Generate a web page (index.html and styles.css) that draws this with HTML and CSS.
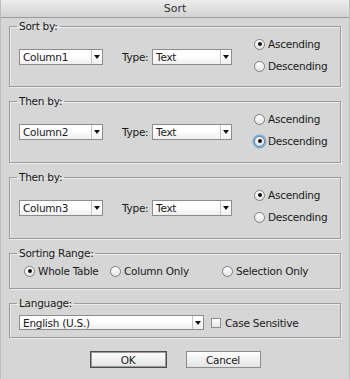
FILE: index.html
```html
<!DOCTYPE html>
<html lang="en">
<head>
    <meta charset="UTF-8">
    <title>Sort</title>
    <link rel="stylesheet" href="styles.css">
</head>
<body>
    <div class="window">
        <div class="titlebar">Sort</div>

        <div class="dialog">
            <fieldset class="group sort-group">
                <legend>Sort by:</legend>
                <div class="sort-row">
                    <div class="select col-select"><span>Column1</span><i class="arrow"></i></div>
                    <span class="type-label">Type:</span>
                    <div class="select type-select"><span>Text</span><i class="arrow"></i></div>
                    <div class="order">
                        <label class="radio"><i class="dot checked"></i>Ascending</label>
                        <label class="radio"><i class="dot"></i>Descending</label>
                    </div>
                </div>
            </fieldset>

            <fieldset class="group sort-group">
                <legend>Then by:</legend>
                <div class="sort-row">
                    <div class="select col-select"><span>Column2</span><i class="arrow"></i></div>
                    <span class="type-label">Type:</span>
                    <div class="select type-select"><span>Text</span><i class="arrow"></i></div>
                    <div class="order">
                        <label class="radio"><i class="dot"></i>Ascending</label>
                        <label class="radio"><i class="dot checked focused"></i>Descending</label>
                    </div>
                </div>
            </fieldset>

            <fieldset class="group sort-group">
                <legend>Then by:</legend>
                <div class="sort-row">
                    <div class="select col-select"><span>Column3</span><i class="arrow"></i></div>
                    <span class="type-label">Type:</span>
                    <div class="select type-select"><span>Text</span><i class="arrow"></i></div>
                    <div class="order">
                        <label class="radio"><i class="dot checked"></i>Ascending</label>
                        <label class="radio"><i class="dot"></i>Descending</label>
                    </div>
                </div>
            </fieldset>

            <fieldset class="group range-group">
                <legend>Sorting Range:</legend>
                <div class="range-options">
                    <label class="radio"><i class="dot checked"></i>Whole Table</label>
                    <label class="radio"><i class="dot"></i>Column Only</label>
                    <label class="radio"><i class="dot"></i>Selection Only</label>
                </div>
            </fieldset>

            <fieldset class="group lang-group">
                <legend>Language:</legend>
                <div class="lang-row">
                    <div class="select lang-select"><span>English (U.S.)</span><i class="arrow"></i></div>
                    <label class="check"><i class="box"></i>Case Sensitive</label>
                </div>
            </fieldset>

            <div class="buttons">
                <button class="btn default">OK</button>
                <button class="btn">Cancel</button>
            </div>
        </div>
    </div>
</body>
</html>
```

FILE: styles.css
```css
* {
    margin: 0;
    padding: 0;
    box-sizing: border-box;
}

body {
    font-family: 'DejaVu Sans', sans-serif;
    font-size: 10.5px;
    letter-spacing: -0.25px;
    color: #1a1a1a;
    background: #d6d6d6;
}

.window {
    width: 350px;
    height: 379px;
    background: #d6d6d6;
    border-left: 1px solid #bdbdbd;
    border-right: 1px solid #bdbdbd;
}

.titlebar {
    height: 18px;
    line-height: 17px;
    text-align: center;
    font-size: 11px;
    letter-spacing: 0;
    color: #333;
    background: linear-gradient(#ececec, #d2d2d2);
    border-bottom: 1px solid #9a9a9a;
}

.dialog {
    display: flex;
    flex-direction: column;
    gap: 8px;
    padding-top: 2px;
}

/* group boxes */
.group {
    margin: 0 8px;
    padding: 4px 8px 13px 9px;
    border: 1px solid #9b9b9b;
    box-shadow: inset 1px 1px 0 #ececec, 1px 1px 0 #ececec;
}

.group legend {
    margin-left: -2px;
    padding: 0 2px;
    line-height: 13px;
    color: #1a1a1a;
}

.sort-group + .sort-group {
    padding-bottom: 14px;
}

.range-group {
    padding-bottom: 10px;
}

.lang-group {
    padding-top: 5px;
    padding-bottom: 7px;
}

/* popup menus */
.select {
    display: flex;
    align-items: center;
    height: 16px;
    padding-left: 3px;
    border: 1px solid #8c8c8c;
    background: linear-gradient(#ffffff 40%, #efefef);
    line-height: 14px;
}

.select span {
    flex: 1;
}

.select .arrow {
    width: 11px;
    height: 100%;
    border-left: 1px solid #c4c4c4;
    display: flex;
    align-items: center;
    justify-content: center;
}

.select .arrow::after {
    content: '';
    border-top: 4px solid #111;
    border-left: 3px solid transparent;
    border-right: 3px solid transparent;
}

.sort-row {
    display: flex;
    align-items: flex-start;
}

.col-select {
    width: 84px;
    margin-top: 12px;
}

.type-label {
    width: 30px;
    margin: 12px 0 0 19px;
    line-height: 16px;
}

.type-select {
    width: 80px;
    margin-top: 12px;
}

.order {
    display: flex;
    flex-direction: column;
    gap: 8px;
    margin-left: 22px;
}

/* radios and checkbox */
.radio,
.check {
    display: flex;
    align-items: center;
    gap: 3px;
    height: 14px;
    line-height: 14px;
    white-space: nowrap;
}

.dot {
    width: 11px;
    height: 11px;
    border-radius: 50%;
    border: 1px solid #7f7f7f;
    background: linear-gradient(#ffffff, #e4e4e4);
    display: flex;
    align-items: center;
    justify-content: center;
}

.dot.checked::after {
    content: '';
    width: 4px;
    height: 4px;
    border-radius: 50%;
    background: #111;
}

.dot.focused {
    border-color: #4a7fbf;
    box-shadow: 0 0 0 1.5px rgba(95, 150, 215, 0.7);
}

.range-options {
    display: grid;
    grid-template-columns: 86px 112px auto;
    padding-left: 5px;
}

.lang-row {
    display: flex;
    align-items: center;
}

.lang-select {
    width: 185px;
    height: 15px;
}

.check {
    margin-left: 7px;
    gap: 4px;
}

.box {
    width: 10px;
    height: 10px;
    border: 1px solid #8a8a8a;
    background: linear-gradient(#ffffff, #e6e6e6);
}

/* buttons */
.buttons {
    display: flex;
    justify-content: center;
    gap: 19px;
    margin-top: 5px;
}

.btn {
    height: 17px;
    width: 75px;
    font-family: inherit;
    font-size: 10.5px;
    letter-spacing: -0.25px;
    color: #1a1a1a;
    background: linear-gradient(#ffffff, #e3e3e3);
    border: 1px solid #8c8c8c;
}

.btn.default {
    width: 77px;
    border-color: #4d4d4d;
    box-shadow: inset 0 0 0 1px #9a9a9a;
}
```
